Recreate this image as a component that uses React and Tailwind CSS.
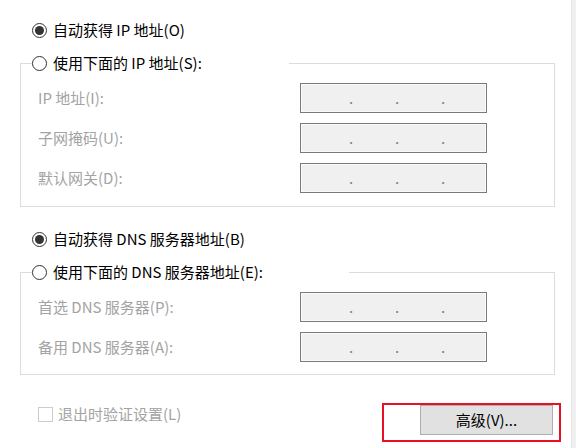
import React from "react";

const FONT = { fontFamily: '"Noto Sans CJK SC", "Noto Sans", sans-serif' };

function Radio({ checked }) {
  return (
    <div className="w-[15px] h-[15px] rounded-full border border-[#333333] bg-white flex items-center justify-center shrink-0">
      {checked && <div className="w-[9px] h-[9px] rounded-full bg-[#333333]" />}
    </div>
  );
}

function RadioRow({ checked, label }) {
  return (
    <div className="flex items-center gap-[6px] h-[20px]">
      <Radio checked={checked} />
      <span className="text-[15px] leading-[20px] text-black whitespace-nowrap">{label}</span>
    </div>
  );
}

function IpField() {
  return (
    <div className="w-[187px] h-[30px] border border-[#7a7a7a] bg-[#f0f0f0]">
      <div className="w-full h-full border border-[#fafafa] flex items-center pl-[47px] text-[15px] leading-[28px] text-[#6f849c]">
        <span className="w-[46px]">.</span>
        <span className="w-[46px]">.</span>
        <span>.</span>
      </div>
    </div>
  );
}

function FieldRow({ label }) {
  return (
    <div className="flex items-center h-[30px]">
      <span className="w-[262px] text-[15px] text-[#a3a3a3] whitespace-nowrap">{label}</span>
      <IpField />
    </div>
  );
}

function Group({ legend, legendWidth, rows, pb }) {
  return (
    <div className="ml-[20px] w-[535px] flex flex-col">
      <div className="flex h-[22px]">
        <div className="self-end w-[12px] h-[11px] border-t border-l border-[#dcdcdc]" />
        <div className="flex items-center" style={{ width: legendWidth }}>
          <RadioRow checked={false} label={legend} />
        </div>
        <div className="self-end flex-1 h-[11px] border-t border-r border-[#dcdcdc]" />
      </div>
      <div className={`border-l border-r border-b border-[#dcdcdc] pl-[17px] pt-[9px] flex flex-col gap-[10px] ${pb}`}>
        {rows.map((r) => (
          <FieldRow key={r} label={r} />
        ))}
      </div>
    </div>
  );
}

export default function App() {
  return (
    <div className="w-[576px] h-[448px] bg-white flex overflow-hidden" style={FONT}>
      <div className="w-[571px] flex flex-col">
        <div className="ml-[32px] mt-[20px]">
          <RadioRow checked label="自动获得 IP 地址(O)" />
        </div>
        <div className="mt-[12px]">
          <Group
            legend="使用下面的 IP 地址(S):"
            legendWidth={257}
            rows={["IP 地址(I):", "子网掩码(U):", "默认网关(D):"]}
            pb="pb-[13px]"
          />
        </div>
        <div className="ml-[32px] mt-[22px]">
          <RadioRow checked label="自动获得 DNS 服务器地址(B)" />
        </div>
        <div className="mt-[12px]">
          <Group
            legend="使用下面的 DNS 服务器地址(E):"
            legendWidth={317}
            rows={["首选 DNS 服务器(P):", "备用 DNS 服务器(A):"]}
            pb="pb-[12px]"
          />
        </div>
        <div className="flex items-start mt-[28px]">
          <div className="ml-[38px] flex items-center gap-[5px] h-[22px]">
            <div className="w-[15px] h-[15px] border border-[#cccccc] bg-white" />
            <span className="text-[15px] text-[#a3a3a3] whitespace-nowrap">退出时验证设置(L)</span>
          </div>
          <div className="flex-1" />
          <div className="mr-[10px] w-[179px] h-[39px] border-2 border-[#e81123] pl-[36px]">
            <div className="w-[133px] h-[30px] bg-[#e1e1e1] border border-[#adadad] flex items-center justify-center text-[15px] text-black">
              高级(V)...
            </div>
          </div>
        </div>
      </div>
      <div className="w-[5px] h-full bg-[#f0f0f0] border-l border-[#e6e6e6]" />
    </div>
  );
}
